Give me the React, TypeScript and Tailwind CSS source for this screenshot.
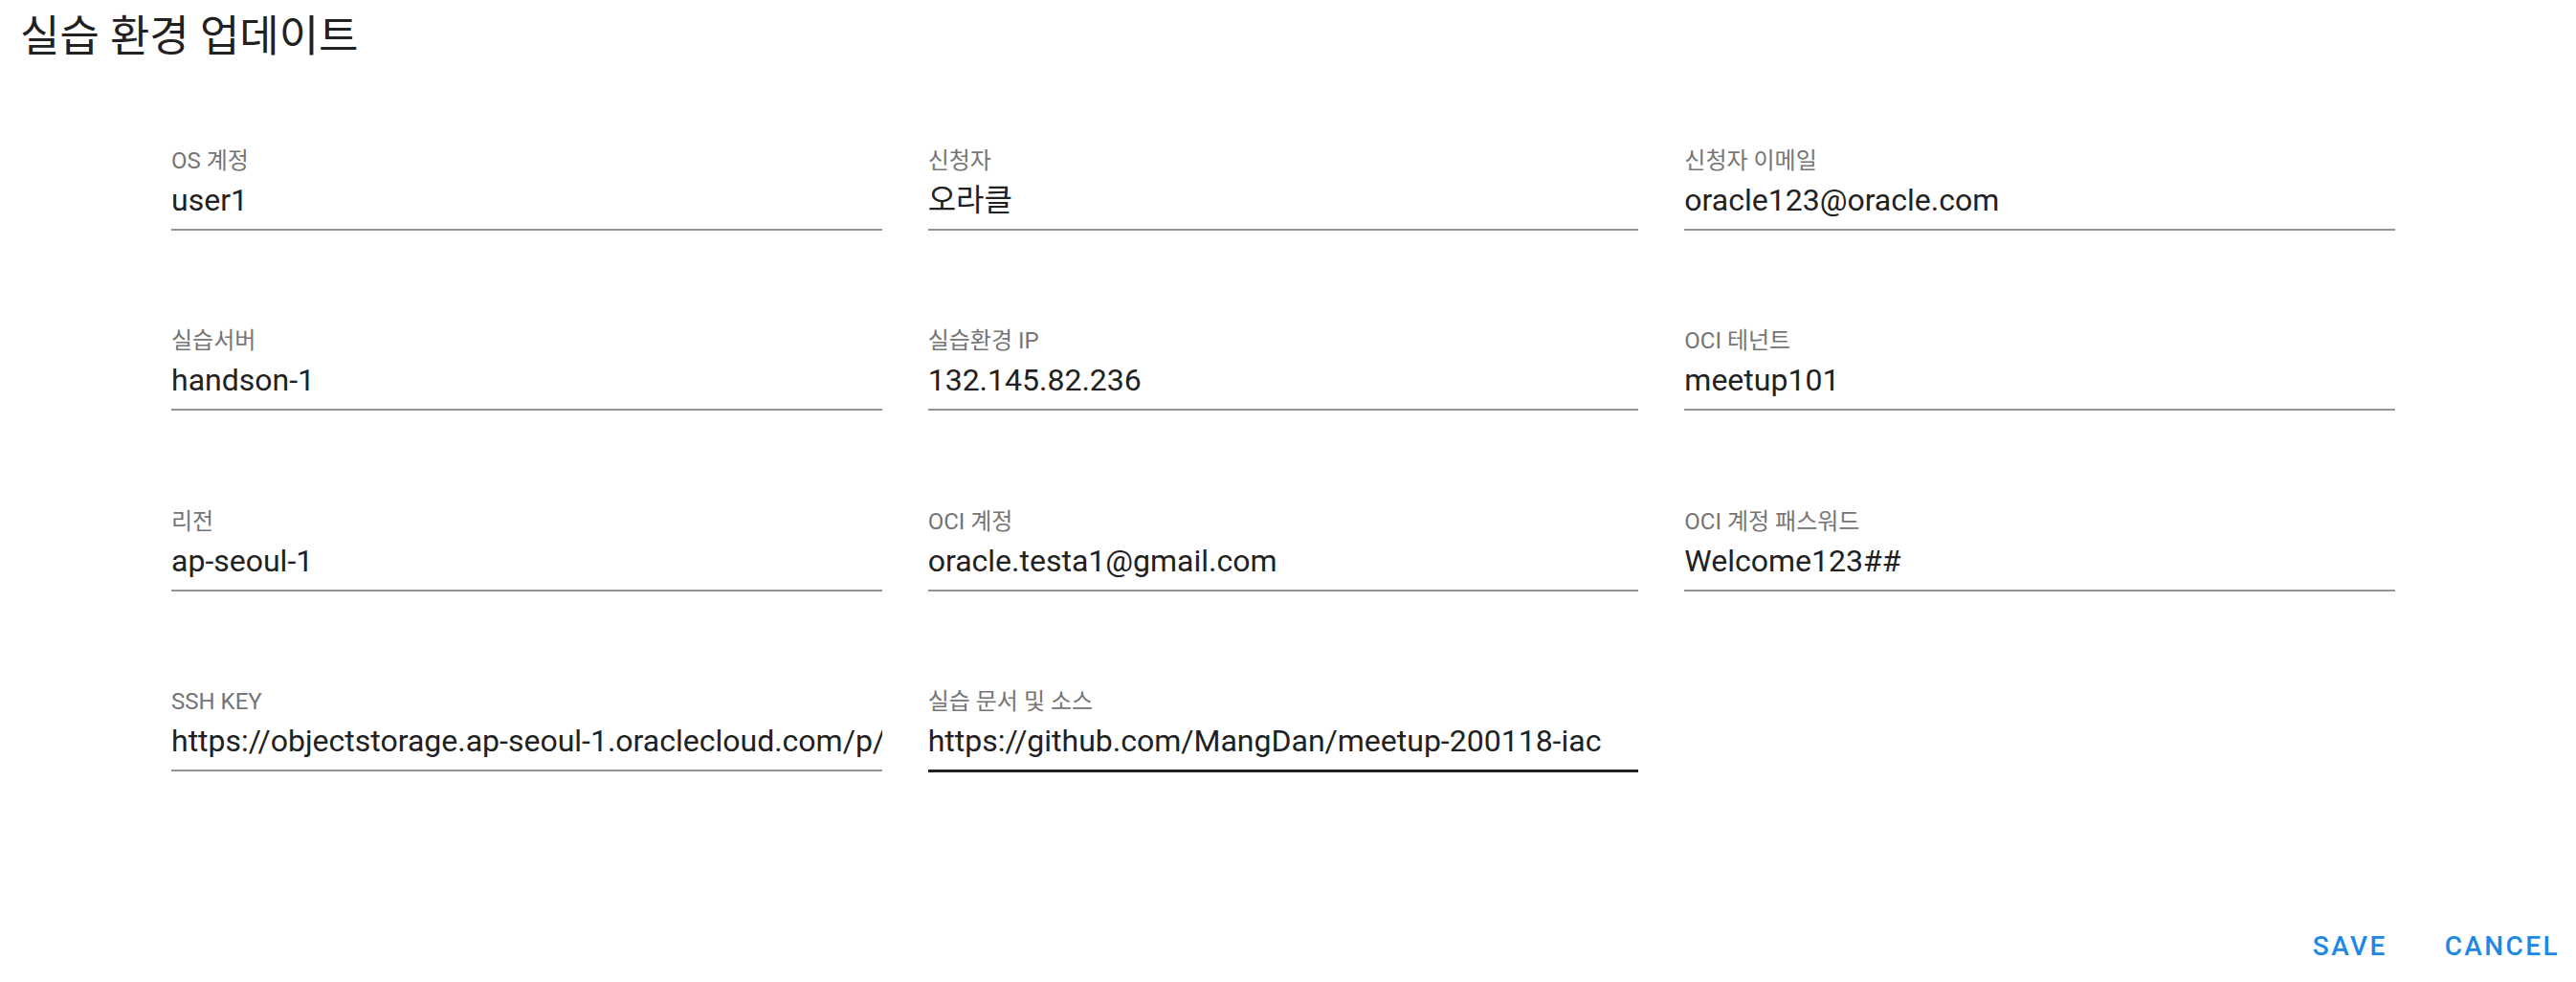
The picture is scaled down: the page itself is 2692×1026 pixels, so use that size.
const fields = [
  { label: "OS 계정", value: "user1" },
  { label: "신청자", value: "오라클" },
  { label: "신청자 이메일", value: "oracle123@oracle.com" },
  { label: "실습서버", value: "handson-1" },
  { label: "실습환경 IP", value: "132.145.82.236" },
  { label: "OCI 테넌트", value: "meetup101" },
  { label: "리전", value: "ap-seoul-1" },
  { label: "OCI 계정", value: "oracle.testa1@gmail.com" },
  { label: "OCI 계정 패스워드", value: "Welcome123##" },
  { label: "SSH KEY", value: "https://objectstorage.ap-seoul-1.oraclecloud.com/p/" },
  { label: "실습 문서 및 소스", value: "https://github.com/MangDan/meetup-200118-iac", hover: true },
];

function Field({ label, value, hover }: { label: string; value: string; hover?: boolean }) {
  return (
    <div className="flex flex-col">
      <div className="h-[28px] text-[24px] leading-[28px] text-[#757575] whitespace-nowrap">{label}</div>
      <div
        className={
          hover
            ? "mt-[8px] pb-[11px] border-b-[3px] border-[#212121] overflow-hidden whitespace-nowrap text-[32px] leading-[38px] text-[#212121]"
            : "mt-[8px] pb-[11px] border-b-2 border-[#949494] overflow-hidden whitespace-nowrap text-[32px] leading-[38px] text-[#212121]"
        }
      >
        {value}
      </div>
    </div>
  );
}

export default function App() {
  return (
    <div
      className="w-[2692px] h-[1026px] bg-white flex flex-col"
      style={{ fontFamily: "Roboto, 'Noto Sans CJK KR', sans-serif" }}
    >
      {/* Title */}
      <div className="pl-[21px] pt-[11px] h-[66px] text-[45px] leading-[56px] text-[#212121] whitespace-nowrap">
        실습 환경 업데이트
      </div>

      {/* Form */}
      <div className="pt-[88px] pl-[179px] w-[2503px] grid grid-cols-3 gap-x-[48px] gap-y-[101.3px]">
        {fields.map((f) => (
          <Field key={f.label} label={f.label} value={f.value} hover={f.hover} />
        ))}
      </div>

      {/* Actions */}
      <div className="mt-auto mb-[21px] flex justify-end items-center gap-[60px] pr-[17px] text-[28px] leading-[32px] font-medium tracking-[2.4px] text-[#1e88e5]">
        <span>SAVE</span>
        <span>CANCEL</span>
      </div>
    </div>
  );
}
